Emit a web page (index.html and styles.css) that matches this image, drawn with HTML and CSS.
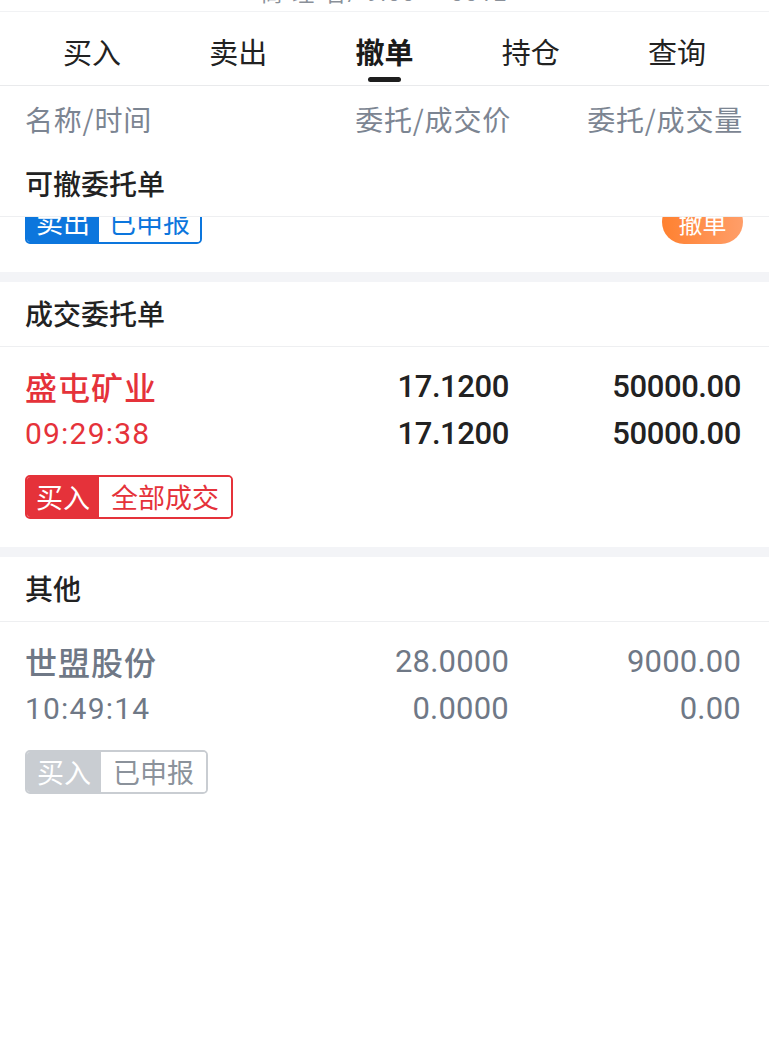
FILE: index.html
```html
<!DOCTYPE html>
<html lang="zh-CN">
<head>
<meta charset="utf-8">
<title>撤单</title>
<link rel="stylesheet" href="styles.css">
</head>
<body>
<div class="app">
  <div class="topline"><div class="topline-text">商 理 名/ 9:33 — 0012</div></div>

  <nav class="tabs">
    <div class="tab"><span class="tab-label">买入</span></div>
    <div class="tab"><span class="tab-label">卖出</span></div>
    <div class="tab active"><span class="tab-label">撤单</span><i class="tab-bar"></i></div>
    <div class="tab"><span class="tab-label">持仓</span></div>
    <div class="tab"><span class="tab-label">查询</span></div>
  </nav>

  <div class="cols colhead">
    <span class="c-name">名称/时间</span>
    <span class="c-num">委托/成交价</span>
    <span class="c-num">委托/成交量</span>
  </div>

  <section class="group">
    <div class="group-title">可撤委托单</div>
    <div class="peek">
      <div class="order order-peek">
        <div class="tag-row">
          <span class="tag tag-blue"><b>卖出</b><em>已申报</em></span>
          <span class="cancel-btn">撤单</span>
        </div>
      </div>
    </div>
  </section>

  <div class="gap"></div>

  <section class="group">
    <div class="group-title">成交委托单</div>
    <div class="order order-red">
      <div class="cols line">
        <span class="c-name name">盛屯矿业</span>
        <span class="c-num">17.1200</span>
        <span class="c-num">50000.00</span>
      </div>
      <div class="cols line">
        <span class="c-name time">09:29:38</span>
        <span class="c-num">17.1200</span>
        <span class="c-num">50000.00</span>
      </div>
      <div class="tag-row">
        <span class="tag tag-red"><b>买入</b><em>全部成交</em></span>
      </div>
    </div>
  </section>

  <div class="gap"></div>

  <section class="group">
    <div class="group-title">其他</div>
    <div class="order order-gray">
      <div class="cols line">
        <span class="c-name name">世盟股份</span>
        <span class="c-num">28.0000</span>
        <span class="c-num">9000.00</span>
      </div>
      <div class="cols line">
        <span class="c-name time">10:49:14</span>
        <span class="c-num">0.0000</span>
        <span class="c-num">0.00</span>
      </div>
      <div class="tag-row">
        <span class="tag tag-gray"><b>买入</b><em>已申报</em></span>
      </div>
    </div>
  </section>
</div>
</body>
</html>
```

FILE: styles.css
```css
* { box-sizing: border-box; margin: 0; padding: 0; }

html, body {
  background: #ffffff;
}

body {
  font-family: Roboto, "Noto Sans CJK SC", sans-serif;
  color: #222222;
}

.app {
  width: 769px;
  min-height: 1062px;
  background: #ffffff;
}

/* cut-off line at the very top */
.topline {
  height: 12px;
  overflow: hidden;
  border-bottom: 1px solid #f1f2f4;
  text-align: center;
}
.topline-text {
  margin-top: -18px;
  font-size: 22px;
  line-height: 24px;
  color: #8a9099;
  letter-spacing: 2px;
}

/* tabs */
.tabs {
  display: flex;
  height: 74px;
  padding: 0 19px;
  border-bottom: 1px solid #e9eaec;
}
.tab {
  flex: 1;
  display: flex;
  flex-direction: column;
  align-items: center;
  padding-top: 19px;
}
.tab-label {
  font-family: "Noto Sans CJK SC", sans-serif;
  font-size: 29px;
  line-height: 40px;
  color: #222222;
}
.tab.active .tab-label {
  font-weight: 700;
  color: #1b1b1b;
}
.tab-bar {
  display: block;
  width: 33px;
  height: 5px;
  margin-top: 6px;
  border-radius: 3px;
  background: #1e1e1e;
}

/* column grid */
.cols {
  display: grid;
  grid-template-columns: 1fr 200px 232px;
  padding: 0 26px 0 25px;
}
.c-num {
  text-align: right;
}

.colhead {
  height: 66px;
  align-items: center;
  font-family: "Noto Sans CJK SC", sans-serif;
  font-size: 28px;
  letter-spacing: 0.8px;
  line-height: 40px;
  color: #7c8592;
}

/* sections */
.group-title {
  height: 65px;
  padding-left: 25px;
  border-bottom: 1px solid #eeeff1;
  font-family: "Noto Sans CJK SC", sans-serif;
  font-size: 28px;
  font-weight: 500;
  line-height: 62px;
  color: #222222;
}

.gap {
  height: 10px;
  background: #f3f4f7;
}

.peek {
  height: 55px;
  overflow: hidden;
  display: flex;
  flex-direction: column;
  justify-content: flex-end;
}

.order {
  padding: 16px 0 28px;
}
.order-peek {
  padding-top: 0;
}

.line {
  height: 47px;
  align-items: center;
  font-size: 31px;
  line-height: 47px;
}
.line .c-num {
  font-weight: 500;
  letter-spacing: -0.4px;
  margin-right: 2px;
  color: #222222;
}
.name {
  font-family: "Noto Sans CJK SC", sans-serif;
  font-weight: 500;
  font-size: 32px;
  letter-spacing: 1px;
}
.time {
  font-size: 30px;
  font-weight: 400;
  letter-spacing: 1.2px;
}

.order-red .name,
.order-red .time {
  color: #e5323a;
}

.order-gray .name,
.order-gray .time,
.order-gray .line .c-num {
  color: #6f7886;
  font-weight: 400;
}
.order-gray .line .c-num {
  letter-spacing: 0.2px;
}
.order-gray .name {
  font-weight: 500;
}

/* tags */
.tag-row {
  display: flex;
  justify-content: space-between;
  align-items: center;
  margin-top: 18px;
  padding: 0 26px 0 25px;
}
.order-peek .tag-row {
  margin-top: 0;
}
.tag {
  display: inline-flex;
  height: 44px;
  border: 2px solid;
  border-radius: 5px;
  overflow: hidden;
  font-family: "Noto Sans CJK SC", sans-serif;
  font-size: 27px;
  line-height: 40px;
}
.tag b {
  font-weight: 400;
  color: #ffffff;
  padding: 0 9px;
}
.tag em {
  font-style: normal;
  padding: 0 12px;
  background: #ffffff;
}

.tag-red { border-color: #e5323a; }
.tag-red b { background: #e5323a; }
.tag-red em { color: #e5323a; }

.tag-blue { border-color: #0c76dd; }
.tag-blue b { background: #0c76dd; }
.tag-blue em { color: #0c76dd; padding: 0 10px; }

.tag-gray { border-color: #c9cdd2; }
.tag-gray b { background: #c9cdd2; padding: 0 10px; }
.tag-gray em { color: #8b929b; }

.cancel-btn {
  display: inline-flex;
  align-items: center;
  justify-content: center;
  width: 81px;
  height: 44px;
  border-radius: 22px;
  background: linear-gradient(90deg, #ff8130 0%, #ff9e69 100%);
  color: #ffffff;
  font-family: "Noto Sans CJK SC", sans-serif;
  font-size: 24px;
}
```
